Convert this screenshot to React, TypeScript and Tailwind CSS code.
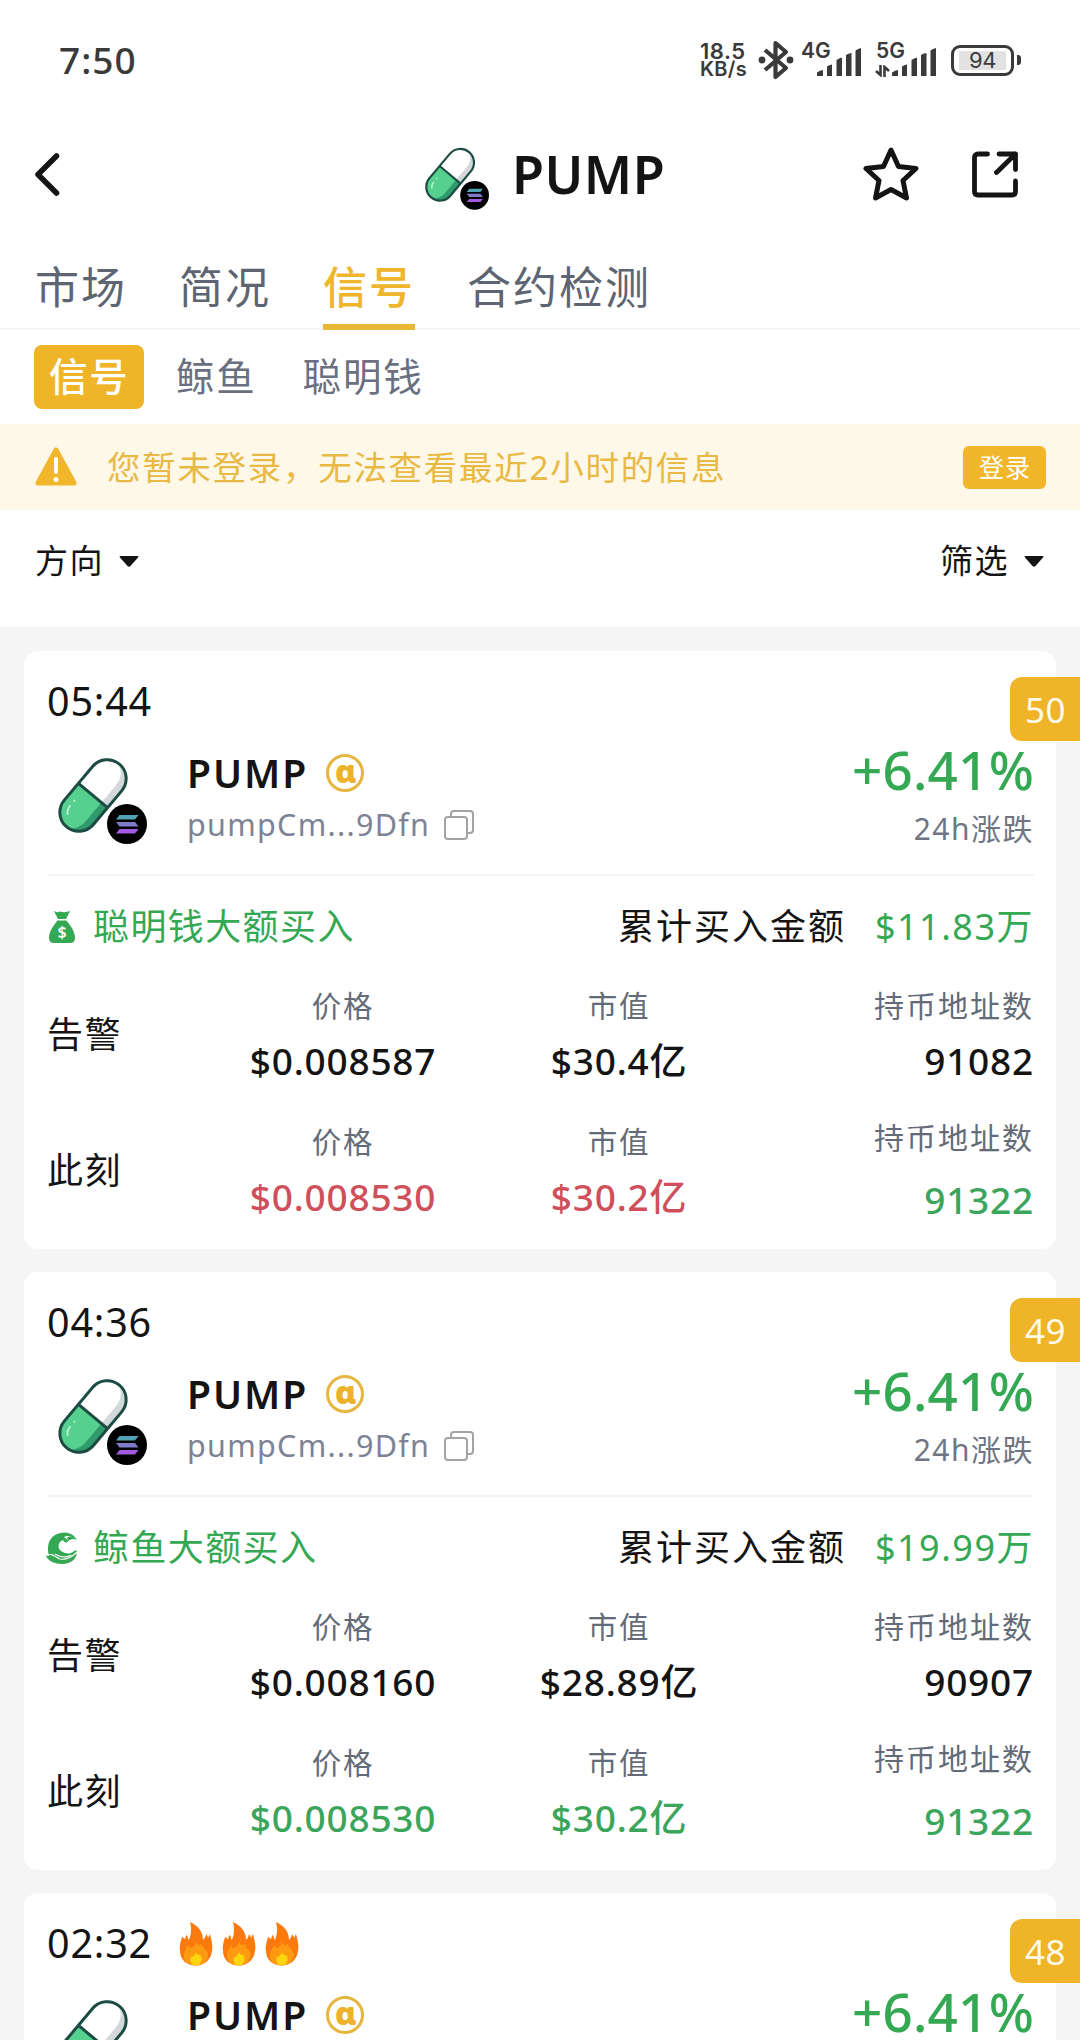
import type { ReactNode } from "react";

function TokenLogo({ className }: { className: string }) {
  return (
    <svg viewBox="0 0 100 100" className={className} fill="none">
      <g transform="translate(46 45.5) rotate(-50)">
        <rect x="-41" y="-19" width="82" height="38" rx="19" fill="#fff" />
        <path d="M0 -19H-22A19 19 0 0 0 -22 19H0Z" fill="#56d08e" />
        <path d="M0 11H-24C-31 11 -36 8 -39 5C-37 13 -31 19 -22 19H0Z" fill="#2f9a6b" />
        <path d="M1 11H22C31 11 36 7 39 2C38 12 31 19 22 19H1Z" fill="#d3d8da" />
        <path d="M-31 -7C-29 -10 -26 -11 -22 -11M-17 -11H-15" stroke="#c9f5dc" strokeWidth="1.6" />
        <rect x="-41" y="-19" width="82" height="38" rx="19" stroke="#1c4b43" strokeWidth="3" />
        <path d="M0 -19V19" stroke="#1c4b43" strokeWidth="3" />
      </g>
      <circle cx="80" cy="74" r="20" fill="#000" />
      <path d="M72.5 65H91.5L88 69.5H69Z" fill="#4fa3b4" />
      <path d="M69 72H88L91.5 76.5H72.5Z" fill="#7f7ac9" />
      <path d="M72.5 79H91.5L88 83.5H69Z" fill="#a25be0" />
    </svg>
  );
}

function SignalBars() {
  return (
    <svg viewBox="0 0 45 29" className="h-[29px] w-[45px]" fill="#3a3a3a">
      <path d="M0 28V24.5Q3 22 6 22V28ZM10 28V18.5Q12 17 15 16.5V28ZM19.5 28V12Q22 10 25 9.5V28ZM29 28V7Q31 5.5 34.5 5V28ZM38.5 28V2.5Q41 .5 44 0V28Z" />
    </svg>
  );
}

function StatusBar() {
  return (
    <div className="flex h-[120px] items-center justify-between px-[59px] text-[#3a3a3a]">
      <div className="font-['Noto_Sans'] text-[37px] font-medium leading-[40px] tracking-[1px]">7:50</div>
      <div className="flex items-center font-['Inter'] font-semibold">
        <div className="w-[58px] text-[22px] leading-[18px] tracking-[0.5px]">
          <div>18.5</div>
          <div className="text-[20px] tracking-[0.3px]">KB/s</div>
        </div>
        <svg viewBox="0 0 36 40" className="h-[40px] w-[36px]" fill="none" stroke="#3a3a3a" strokeWidth="4.2" strokeLinejoin="round">
          <path d="M7 10L28 28L17.5 37V3L28 12L7 30" />
          <circle cx="4" cy="20" r="3.4" fill="#3a3a3a" stroke="none" />
          <circle cx="32" cy="20" r="3.4" fill="#3a3a3a" stroke="none" />
        </svg>
        <div className="relative ml-[7px] flex h-[34px] w-[61px] items-end justify-end">
          <span className="absolute left-0 top-[-1px] text-[21px] leading-[18px]">4G</span>
          <SignalBars />
        </div>
        <div className="relative ml-[13px] flex h-[34px] w-[62px] items-end justify-end">
          <span className="absolute left-[1px] top-[-1px] text-[21px] leading-[18px]">5G</span>
          <svg viewBox="0 0 15 12" className="absolute bottom-0 left-0 h-[12px] w-[15px]" fill="none" stroke="#3a3a3a" strokeWidth="2.6">
            <path d="M5.5 0V10L1 6M9.5 12V2L14 6" />
          </svg>
          <SignalBars />
        </div>
        <div className="ml-[14px] flex h-[31px] w-[63px] items-center justify-center rounded-[9px] border-[3px] border-[#3a3a3a]">
          <div className="flex h-[19px] w-[47px] items-center justify-center bg-[#e2e2e2] text-[22px] font-normal leading-none tracking-[-0.5px]">94</div>
        </div>
        <div className="ml-[3px] h-[10px] w-[4px] rounded-r-[3px] bg-[#3a3a3a]" />
      </div>
    </div>
  );
}

function Header() {
  return (
    <div className="flex h-[116px] items-start pl-[32px]">
      <svg viewBox="0 0 30 48" className="mt-[30px] h-[48px] w-[30px]" fill="none" stroke="#141414" strokeWidth="5.5" strokeLinecap="round" strokeLinejoin="round">
        <path d="M24.5 6L6 24.5L24.5 43" />
      </svg>
      <TokenLogo className="ml-[355px] mt-[22px] h-[72px] w-[72px]" />
      <div className="ml-[23px] mt-[24px] w-[200px] text-[52px] font-semibold leading-[60px] tracking-[0.5px]">PUMP</div>
      <svg viewBox="0 0 56 56" className="ml-[151px] mt-[26px] h-[56px] w-[56px]" fill="none" stroke="#141414" strokeWidth="5" strokeLinejoin="round">
        <path d="M28 4L35.5 20.5L53 22.5L40 34.5L43.5 52L28 43.5L12.5 52L16 34.5L3 22.5L20.5 20.5Z" />
      </svg>
      <svg viewBox="0 0 48 48" className="ml-[52px] mt-[30px] h-[48px] w-[48px]" fill="none" stroke="#141414" strokeWidth="4.8" strokeLinecap="round" strokeLinejoin="round">
        <path d="M16.5 4H7Q3.5 4 3.5 7.500V41.5Q3.5 45 7 45H41Q44.5 45 44.5 41.5V31M28 4H44.5V19.5M44.5 4L25.5 22.5" />
      </svg>
    </div>
  );
}

function Tabs() {
  const tabs = ["市场", "简况", "信号", "合约检测"];
  return (
    <div className="flex h-[94px] gap-[52px] border-b-2 border-[#f5f5f5] pl-[35px] text-[44px] leading-[102px] tracking-[2px] text-[#5d6472]">
      {tabs.map((tab) =>
        tab === "信号" ? (
          <div key={tab} className="relative h-[94px] font-medium text-[#efb52c]">
            {tab}
            <div className="absolute bottom-0 left-0 h-[6px] w-full bg-[#e9b838]" />
          </div>
        ) : (
          <div key={tab}>{tab}</div>
        ),
      )}
    </div>
  );
}

function SubTabs() {
  return (
    <div className="flex h-[94px] items-start pl-[34px] pt-[15px] text-[38.5px] leading-[62px] tracking-[1.8px] text-[#6a7080]">
      <div className="h-[64px] w-[110px] rounded-[8px] bg-[#f0b428] pl-[15px] font-medium text-white">信号</div>
      <div className="ml-[32px]">鲸鱼</div>
      <div className="ml-[46px]">聪明钱</div>
    </div>
  );
}

function LoginBanner() {
  return (
    <div className="flex h-[86px] items-center bg-[#fef8e8] px-[34px]">
      <svg viewBox="0 0 44 40" className="h-[40px] w-[44px]">
        <path d="M22 3L40 36H4Z" fill="#f2b62b" stroke="#f2b62b" strokeWidth="5" strokeLinejoin="round" />
        <path d="M22 12V25" stroke="#fff" strokeWidth="4" strokeLinecap="round" />
        <circle cx="22" cy="32.5" r="2.5" fill="#fff" />
      </svg>
      <div className="ml-[29px] text-[33.5px] leading-[50px] tracking-[1.7px] text-[#e8ba45]">您暂未登录，无法查看最近2小时的信息</div>
      <div className="ml-auto h-[43px] w-[83px] rounded-[6px] bg-[#f2b62b] pl-[16px] text-[25px] leading-[42px] tracking-[1px] text-white">登录</div>
    </div>
  );
}

function Dropdown({ label }: { label: string }) {
  return (
    <div className="flex items-center text-[33px] leading-[50px] tracking-[1.5px]">
      {label}
      <svg viewBox="0 0 22 12" className="ml-[14px] h-[12px] w-[22px]">
        <path d="M2.5 1H19.5Q21 1 20 2.5L12.5 11Q11 12.3 9.5 11L2 2.5Q1 1 2.5 1Z" fill="#141414" />
      </svg>
    </div>
  );
}

function Fire() {
  return (
    <svg viewBox="0 0 34 44" className="h-[44px] w-[34px]">
      <path d="M11 0C19 4 24 9 24 18C25 17 27 14 27 12C28 13 29 15 29 16L31 12C33 20 34 24 33 29C32 38 25 43.5 17 43.5C8 43.5 1 38 1 29C0 24 2 19 3 15L6 17C7 16 6 14 8 13C9 15 9 17 9.5 18C12 15 13 7 11 0Z" fill="#fb7a0d" />
      <path d="M17 19C18 23 20 24 23 22C23 26 29 28 29 33C28 40 23 43.5 17 43.5C10 43.5 5 40 5 34C5 29 8 26 9 23C10 25 11 26 12 26C15 25 17 22 17 19Z" fill="#fd9a12" />
      <path d="M17 30C18 33 20 33 21 33C24 36 23 43 17 43.5C11 43 11 38 12 35C14 35 16 33 17 30Z" fill="#fdd50d" />
    </svg>
  );
}

function MoneyBag() {
  return (
    <svg viewBox="0 0 28 34" className="ml-[1px] h-[34px] w-[28px]">
      <path d="M6 1Q9 3 12 1.5Q17 3 22 1L18 9H10ZM9.5 10.500H18.5C22 15 27 21 27 28Q27 33 22 33H6Q1 33 1 28C1 21 6 15 9.500 10.500Z" fill="#34a853" />
      <text x="14" y="28" textAnchor="middle" fontSize="16" fontWeight="600" fill="#fff" letterSpacing="0">$</text>
    </svg>
  );
}

function Whale() {
  return (
    <svg viewBox="0 0 32 32" className="-ml-[1px] h-[32px] w-[32px]">
      <path d="M14 1C6 3 2 9 2 16C2 19 2 21 3 23C1 23 0 23 0 24C2 29 9 32 16 32C25 32 31 27 31 19C30 18 28 19 27 20C24 22 19 22 15 19C11 16 12 10 17 8C18 10 20 11 22 10C22 7 19 6 18 5C21 3 27 4 31 8C28 2 21 -1 14 1Z" fill="#34a853" />
      <path d="M21 6C24 3 28 5 31 8C28 6 25 7 22 9Z" fill="#34a853" />
      <path d="M1 24C6 20 9 25 14 27C20 28 26 25 31 20M9 22C14 25 20 26 25 23" stroke="#fff" strokeWidth="1.1" fill="none" />
    </svg>
  );
}

type Tone = "dark" | "red" | "green";
const toneClass: Record<Tone, string> = {
  dark: "text-[#141414]",
  red: "text-[#cf4f5b]",
  green: "text-[#3ba55b]",
};

function Cell({ label, value, tone }: { label: string; value: string; tone: Tone }) {
  return (
    <div className="text-center">
      <div className="text-[29.5px] leading-[58px] tracking-[1.8px] text-[#646b78]">{label}</div>
      <div className={"text-[37px] font-medium leading-[52px] tracking-[0.8px] " + toneClass[tone]}>{value}</div>
    </div>
  );
}

type Detail = {
  icon: ReactNode;
  kind: string;
  total: string;
  alert: [string, string, string];
  tone: Tone;
};

type Signal = {
  time: string;
  rank: number;
  hot?: boolean;
  detail?: Detail;
};

const signals: Signal[] = [
  {
    time: "05:44",
    rank: 50,
    detail: { icon: <MoneyBag />, kind: "聪明钱大额买入", total: "$11.83万", alert: ["$0.008587", "$30.4亿", "91082"], tone: "red" },
  },
  {
    time: "04:36",
    rank: 49,
    detail: { icon: <Whale />, kind: "鲸鱼大额买入", total: "$19.99万", alert: ["$0.008160", "$28.89亿", "90907"], tone: "green" },
  },
  { time: "02:32", rank: 48, hot: true },
];

function SignalDetail({ d }: { d: Detail }) {
  return (
    <>
      <div className="h-[2px] bg-[#f4f4f4]" />
      <div className="flex h-[101px] items-center text-[36px] tracking-[1.4px] text-[#34a853]">
        <div className="w-[46px]">{d.icon}</div>
        {d.kind}
        <div className="ml-auto tracking-[2px] text-[#141414]">累计买入金额</div>
        <div className="ml-[29px] tracking-[1.5px]">{d.total}</div>
      </div>
      <div className="grid h-[116px] grid-cols-[158px_276px_276px_1fr]">
        <div className="text-[36px] leading-[116px] tracking-[1.5px]">告警</div>
        <Cell label="价格" value={d.alert[0]} tone="dark" />
        <Cell label="市值" value={d.alert[1]} tone="dark" />
        <div className="text-right">
          <div className="text-[30px] leading-[58px] tracking-[2px] text-[#646b78]">持币地址数</div>
          <div className="text-[37px] font-medium leading-[52px] tracking-[0.8px]">{d.alert[2]}</div>
        </div>
      </div>
      <div className="mt-[20px] grid h-[116px] grid-cols-[158px_276px_276px_1fr]">
        <div className="text-[36px] leading-[116px] tracking-[1.5px]">此刻</div>
        <Cell label="价格" value="$0.008530" tone={d.tone} />
        <Cell label="市值" value="$30.2亿" tone={d.tone} />
        <div className="text-right">
          <div className="text-[30px] leading-[50px] tracking-[2px] text-[#646b78]">持币地址数</div>
          <div className="text-[37px] font-medium leading-[74px] tracking-[0.8px] text-[#3ba55b]">91322</div>
        </div>
      </div>
    </>
  );
}

function SignalCard({ s }: { s: Signal }) {
  return (
    <div className="relative h-[598px] shrink-0 rounded-[14px] bg-white pl-[23px] pr-[22px] pt-[24px]">
      <div className="absolute -right-[24px] top-[26px] h-[64px] w-[70px] rounded-l-[12px] bg-[#f0b428] pl-[15px] text-[35px] leading-[65px] tracking-[0.5px] text-[#fffbe8]">{s.rank}</div>
      <div className="flex h-[54px] items-center text-[39.5px] tracking-[0.8px]">
        {s.time}
        {s.hot && (
          <div className="ml-[27px] flex gap-[9px]">
            <Fire />
            <Fire />
            <Fire />
          </div>
        )}
      </div>
      <div className="flex h-[145px]">
        <TokenLogo className="mt-[21px] h-[100px] w-[100px]" />
        <div className="ml-[40px] pt-[18px]">
          <div className="flex h-[52px] items-center text-[39px] font-semibold tracking-[2px]">
            PUMP
            <div className="ml-[18px] flex h-[38px] w-[38px] items-center justify-center rounded-full border-[3px] border-[#e5b640] pb-[5px] font-['Noto_Sans'] text-[32px] font-black leading-none tracking-normal text-[#edb22c]">ɑ</div>
          </div>
          <div className="flex h-[52px] items-center text-[30.5px] tracking-[1.3px] text-[#7d8295]">
            pumpCm...9Dfn
            <svg viewBox="0 0 30 30" className="ml-[14px] h-[30px] w-[30px]" fill="none" stroke="#a3a3a3" strokeWidth="2">
              <rect x="1" y="7" width="22" height="22" rx="3" />
              <path d="M7 7V4Q7 1 10 1H26Q29 1 29 4V20Q29 23 26 23H23" />
            </svg>
          </div>
        </div>
        <div className="ml-auto pt-[11px] text-right">
          <div className="text-[53px] font-medium leading-[60px] tracking-[0.2px] text-[#34a853]">+6.41%</div>
          <div className="text-[30px] leading-[58px] tracking-[1.5px] text-[#6f7583]">24h涨跌</div>
        </div>
      </div>
      {s.detail && <SignalDetail d={s.detail} />}
    </div>
  );
}

export default function App() {
  return (
    <div className="flex h-[2040px] w-[1080px] flex-col overflow-hidden bg-white font-['Noto_Sans','Noto_Sans_CJK_SC',sans-serif] text-[#141414]">
      <StatusBar />
      <Header />
      <Tabs />
      <SubTabs />
      <LoginBanner />
      <div className="flex h-[117px] items-start justify-between px-[35px] pt-[26px]">
        <Dropdown label="方向" />
        <Dropdown label="筛选" />
      </div>
      <div className="flex flex-1 flex-col gap-[23px] overflow-hidden bg-[#f5f5f5] px-[24px] pt-[24px]">
        {signals.map((s) => (
          <SignalCard key={s.rank} s={s} />
        ))}
      </div>
    </div>
  );
}
